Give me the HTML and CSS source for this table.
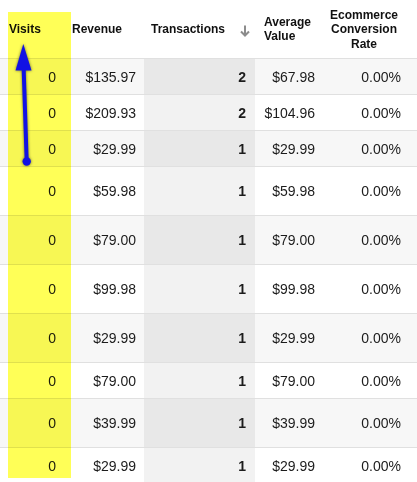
FILE: index.html
```html
<!DOCTYPE html>
<html>
<head>
<meta charset="utf-8">
<link rel="stylesheet" href="styles.css">
</head>
<body>
<div class="page">
  <div class="table">
    <div class="row head">
      <div class="cell h-visits">Visits</div>
      <div class="cell h-rev">Revenue</div>
      <div class="cell h-tx">Transactions
        <svg class="sort" width="10" height="12" viewBox="0 0 10 12"><path d="M5 0.5 V10.5 M1 6.5 L5 10.5 L9 6.5" fill="none" stroke="#8c8c8c" stroke-width="2"/></svg>
      </div>
      <div class="cell h-avg">Average<br>Value</div>
      <div class="cell h-conv">Ecommerce<br>Conversion<br>Rate</div>
    </div>
    <div class="row alt short"><div class="cell n1">0</div><div class="cell n2">$135.97</div><div class="cell n3">2</div><div class="cell n4">$67.98</div><div class="cell n5">0.00%</div></div>
    <div class="row short"><div class="cell n1">0</div><div class="cell n2">$209.93</div><div class="cell n3">2</div><div class="cell n4">$104.96</div><div class="cell n5">0.00%</div></div>
    <div class="row alt short"><div class="cell n1">0</div><div class="cell n2">$29.99</div><div class="cell n3">1</div><div class="cell n4">$29.99</div><div class="cell n5">0.00%</div></div>
    <div class="row tall"><div class="cell n1">0</div><div class="cell n2">$59.98</div><div class="cell n3">1</div><div class="cell n4">$59.98</div><div class="cell n5">0.00%</div></div>
    <div class="row alt tall"><div class="cell n1">0</div><div class="cell n2">$79.00</div><div class="cell n3">1</div><div class="cell n4">$79.00</div><div class="cell n5">0.00%</div></div>
    <div class="row tall"><div class="cell n1">0</div><div class="cell n2">$99.98</div><div class="cell n3">1</div><div class="cell n4">$99.98</div><div class="cell n5">0.00%</div></div>
    <div class="row alt tall"><div class="cell n1">0</div><div class="cell n2">$29.99</div><div class="cell n3">1</div><div class="cell n4">$29.99</div><div class="cell n5">0.00%</div></div>
    <div class="row short"><div class="cell n1">0</div><div class="cell n2">$79.00</div><div class="cell n3">1</div><div class="cell n4">$79.00</div><div class="cell n5">0.00%</div></div>
    <div class="row alt tall"><div class="cell n1">0</div><div class="cell n2">$39.99</div><div class="cell n3">1</div><div class="cell n4">$39.99</div><div class="cell n5">0.00%</div></div>
    <div class="row short"><div class="cell n1">0</div><div class="cell n2">$29.99</div><div class="cell n3">1</div><div class="cell n4">$29.99</div><div class="cell n5">0.00%</div></div>
  </div>
  <div class="highlight"></div>
  <svg class="annot" width="417" height="482" viewBox="0 0 417 482">
    <g class="arrow" fill="#1212e4" stroke="#1212e4">
      <line x1="26.7" y1="161.5" x2="23.5" y2="64" stroke-width="4"/>
      <polygon points="23.3,44 15.5,70.5 31.5,70.5" stroke="none"/>
      <circle cx="26.7" cy="161.5" r="4.2" stroke="none"/>
    </g>
  </svg>
</div>
</body>
</html>
```

FILE: styles.css
```css
html, body {
  margin: 0;
  padding: 0;
  background: #ffffff;
}

.page {
  position: relative;
  width: 417px;
  height: 482px;
  overflow: hidden;
  font-family: "Liberation Sans", Arial, sans-serif;
  color: #1c1c1c;
}

.table {
  display: flex;
  flex-direction: column;
}

.row {
  display: grid;
  grid-template-columns: 71px 73px 111px 75px 87px;
  box-sizing: border-box;
  border-bottom: 1px solid #e0e0e0;
  background: #ffffff;
}

.row.alt {
  background: #f7f7f7;
}

.row.short { height: 36px; }
.row.tall { height: 49px; }

.row.head {
  height: 59px;
  background: #ffffff;
  font-size: 12px;
  font-weight: bold;
  line-height: 14.5px;
  color: #111;
}

.cell {
  display: flex;
  align-items: center;
  box-sizing: border-box;
}

.h-visits { padding-left: 9px; padding-top: 1px; }
.h-rev { padding-left: 1px; padding-top: 1px; }
.h-tx { padding-left: 7px; padding-top: 1px; gap: 0; }
.h-avg { padding-left: 9px; }
.h-conv {
  justify-content: center;
  text-align: center;
  padding-right: 19px;
  padding-top: 1px;
}

.sort {
  margin-left: 15px;
  margin-top: 2px;
}

.row:not(.head) .cell {
  justify-content: flex-end;
  font-size: 14px;
}

.n1 { padding-right: 15px; }
.n2 { padding-right: 8px; }
.n3 {
  padding-right: 9px;
  font-weight: bold;
  background: #f2f2f2;
}
.row.alt .n3 { background: #e8e8e8; }
.n4 { padding-right: 15px; }
.n5 { padding-right: 16px; }

.highlight {
  position: absolute;
  left: 8px;
  top: 12px;
  width: 63px;
  height: 466px;
  background: #ffff57;
  mix-blend-mode: multiply;
  pointer-events: none;
}

.annot {
  position: absolute;
  left: 0;
  top: 0;
  pointer-events: none;
}

.arrow {
  filter: drop-shadow(0 0 1.5px rgba(0, 0, 0, 0.55));
}
```
